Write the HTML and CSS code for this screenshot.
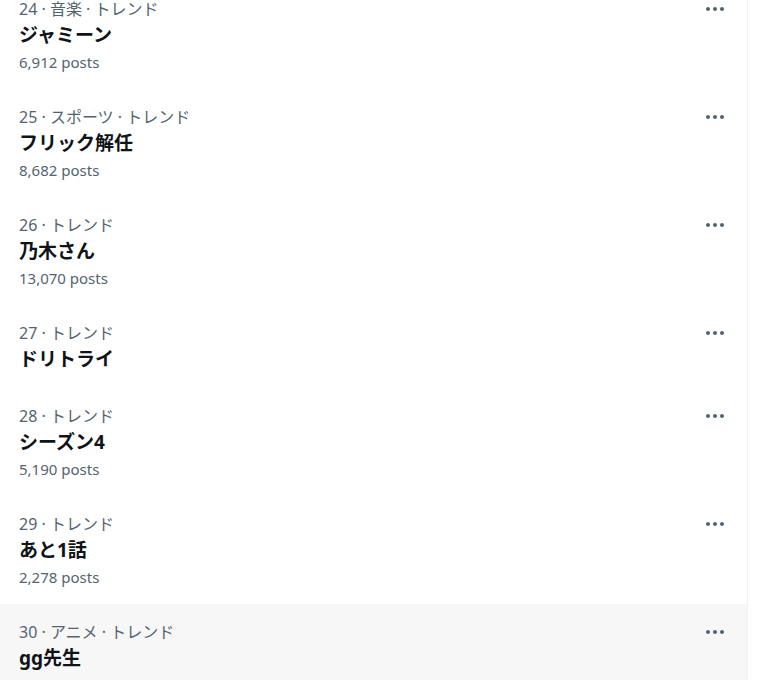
FILE: index.html
```html
<!DOCTYPE html>
<html>
  <head>
    <title>トレンド</title>
    <link rel="stylesheet" href="styles.css">
  </head>
  <body>
    <div class="trends">
      <div class="trend">
        <div class="trend__body">
          <div class="trend__meta">24 · 音楽 · トレンド</div>
          <div class="trend__name">ジャミーン</div>
          <div class="trend__count">6,912 posts</div>
        </div>
        <button class="trend__more"><svg viewBox="0 0 24 24"><path d="M3 12c0-1.1.9-2 2-2s2 .9 2 2-.9 2-2 2-2-.9-2-2zm9 2c1.1 0 2-.9 2-2s-.9-2-2-2-2 .9-2 2 .9 2 2 2zm7 0c1.1 0 2-.9 2-2s-.9-2-2-2-2 .9-2 2 .9 2 2 2z"/></svg></button>
      </div>
      <div class="trend">
        <div class="trend__body">
          <div class="trend__meta">25 · スポーツ · トレンド</div>
          <div class="trend__name">フリック解任</div>
          <div class="trend__count">8,682 posts</div>
        </div>
        <button class="trend__more"><svg viewBox="0 0 24 24"><path d="M3 12c0-1.1.9-2 2-2s2 .9 2 2-.9 2-2 2-2-.9-2-2zm9 2c1.1 0 2-.9 2-2s-.9-2-2-2-2 .9-2 2 .9 2 2 2zm7 0c1.1 0 2-.9 2-2s-.9-2-2-2-2 .9-2 2 .9 2 2 2z"/></svg></button>
      </div>
      <div class="trend">
        <div class="trend__body">
          <div class="trend__meta">26 · トレンド</div>
          <div class="trend__name">乃木さん</div>
          <div class="trend__count">13,070 posts</div>
        </div>
        <button class="trend__more"><svg viewBox="0 0 24 24"><path d="M3 12c0-1.1.9-2 2-2s2 .9 2 2-.9 2-2 2-2-.9-2-2zm9 2c1.1 0 2-.9 2-2s-.9-2-2-2-2 .9-2 2 .9 2 2 2zm7 0c1.1 0 2-.9 2-2s-.9-2-2-2-2 .9-2 2 .9 2 2 2z"/></svg></button>
      </div>
      <div class="trend">
        <div class="trend__body">
          <div class="trend__meta">27 · トレンド</div>
          <div class="trend__name">ドリトライ</div>
        </div>
        <button class="trend__more"><svg viewBox="0 0 24 24"><path d="M3 12c0-1.1.9-2 2-2s2 .9 2 2-.9 2-2 2-2-.9-2-2zm9 2c1.1 0 2-.9 2-2s-.9-2-2-2-2 .9-2 2 .9 2 2 2zm7 0c1.1 0 2-.9 2-2s-.9-2-2-2-2 .9-2 2 .9 2 2 2z"/></svg></button>
      </div>
      <div class="trend">
        <div class="trend__body">
          <div class="trend__meta">28 · トレンド</div>
          <div class="trend__name">シーズン4</div>
          <div class="trend__count">5,190 posts</div>
        </div>
        <button class="trend__more"><svg viewBox="0 0 24 24"><path d="M3 12c0-1.1.9-2 2-2s2 .9 2 2-.9 2-2 2-2-.9-2-2zm9 2c1.1 0 2-.9 2-2s-.9-2-2-2-2 .9-2 2 .9 2 2 2zm7 0c1.1 0 2-.9 2-2s-.9-2-2-2-2 .9-2 2 .9 2 2 2z"/></svg></button>
      </div>
      <div class="trend">
        <div class="trend__body">
          <div class="trend__meta">29 · トレンド</div>
          <div class="trend__name">あと1話</div>
          <div class="trend__count">2,278 posts</div>
        </div>
        <button class="trend__more"><svg viewBox="0 0 24 24"><path d="M3 12c0-1.1.9-2 2-2s2 .9 2 2-.9 2-2 2-2-.9-2-2zm9 2c1.1 0 2-.9 2-2s-.9-2-2-2-2 .9-2 2 .9 2 2 2zm7 0c1.1 0 2-.9 2-2s-.9-2-2-2-2 .9-2 2 .9 2 2 2z"/></svg></button>
      </div>
      <div class="trend trend--hover">
        <div class="trend__body">
          <div class="trend__meta">30 · アニメ · トレンド</div>
          <div class="trend__name">gg先生</div>
        </div>
        <button class="trend__more"><svg viewBox="0 0 24 24"><path d="M3 12c0-1.1.9-2 2-2s2 .9 2 2-.9 2-2 2-2-.9-2-2zm9 2c1.1 0 2-.9 2-2s-.9-2-2-2-2 .9-2 2 .9 2 2 2zm7 0c1.1 0 2-.9 2-2s-.9-2-2-2-2 .9-2 2 .9 2 2 2z"/></svg></button>
      </div>
    </div>
  </body>
</html>
```

FILE: styles.css
```css
body {
  margin: 0;
  font-family: "Noto Sans", "Noto Sans CJK JP", sans-serif;
  background-color: #fff;
  overflow: hidden;
}

.trends {
  width: 747px;
  margin-top: -19px;
  border-right: 1px solid #eff3f4;
  min-height: 720px;
}

.trend {
  display: flex;
  justify-content: space-between;
  align-items: flex-start;
  padding: 19px 20px 17px 19px;
}

.trend--hover {
  background-color: #f7f7f7;
}

.trend__meta {
  font-size: 16px;
  line-height: 19px;
  color: #536471;
}

.trend__name {
  padding-top: 4px;
  font-size: 19px;
  line-height: 24px;
  font-weight: bold;
  color: #0f1419;
}

.trend__count {
  padding-top: 5px;
  font-size: 15px;
  line-height: 20px;
  color: #536471;
}

.trend__more {
  margin-top: -3px;
  padding: 0;
  border: none;
  background: none;
  width: 24px;
  height: 24px;
  cursor: pointer;
}

.trend__more svg {
  display: block;
  width: 24px;
  height: 24px;
  fill: #536471;
}
```
